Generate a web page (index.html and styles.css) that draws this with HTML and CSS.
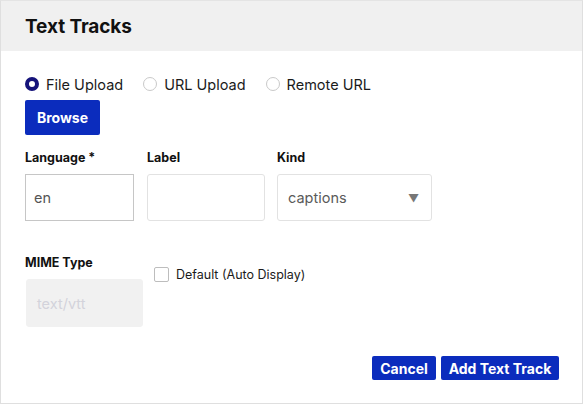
FILE: index.html
```html
<!DOCTYPE html>
<html>
<head>
<meta charset="utf-8">
<link rel="stylesheet" href="styles.css">
</head>
<body>
<div class="dialog">
  <div class="header"><h1 class="title">Text Tracks</h1></div>
  <div class="content">
    <div class="radios">
      <label class="radio"><span class="dot checked"></span>File Upload</label>
      <label class="radio"><span class="dot"></span>URL Upload</label>
      <label class="radio"><span class="dot"></span>Remote URL</label>
    </div>
    <button class="btn browse">Browse</button>
    <div class="row">
      <div class="field f1">
        <div class="lbl">Language *</div>
        <div class="input dark">en</div>
      </div>
      <div class="field f2">
        <div class="lbl">Label</div>
        <div class="input"></div>
      </div>
      <div class="field f3">
        <div class="lbl">Kind</div>
        <div class="input select">captions<span class="arrow">▼</span></div>
      </div>
    </div>
    <div class="row row2">
      <div class="field f2">
        <div class="lbl">MIME Type</div>
        <div class="input disabled">text/vtt</div>
      </div>
      <label class="check"><span class="box"></span>Default (Auto Display)</label>
    </div>
    <div class="actions">
      <button class="btn small cancel">Cancel</button>
      <button class="btn small add">Add Text Track</button>
    </div>
  </div>
</div>
</body>
</html>
```
FILE: styles.css
```css
* { box-sizing: border-box; }
html, body { margin: 0; padding: 0; background: #fff; }
body { font-family: "Inter", "Liberation Sans", sans-serif; color: #1b1b1f; }
.dialog {
  width: 583px;
  height: 404px;
  border: 1px solid #dfdfdf;
  border-top-color: #e4e4e4;
  display: flex;
  flex-direction: column;
}
.header {
  height: 50px;
  background: #f0f0f0;
  padding-left: 24px;
  display: flex;
  align-items: center;
}
.title {
  margin: 0;
  font-size: 19px;
  font-weight: 700;
  letter-spacing: -0.1px;
  color: #111;
  padding-top: 1px;
}
.content { padding: 0 24px; flex: 1; display: flex; flex-direction: column; }
.radios { display: flex; margin-top: 24px; height: 18px; align-items: center; }
.radio { display: flex; align-items: center; font-size: 14.5px; color: #1b1b1b; margin-right: 20px; }
.dot {
  width: 14px; height: 14px; border-radius: 50%;
  border: 1px solid #c9c9c9; margin-right: 7px; background: #fff;
}
.dot.checked { border: 4.5px solid #15137a; background: #fff; }
.btn {
  background: #0b2cbd;
  color: #fff;
  border: 0;
  border-radius: 2px;
  font-family: inherit;
  font-weight: 700;
  padding: 0;
  white-space: nowrap;
}
.browse { width: 75px; height: 35px; font-size: 14px; margin-top: 7px; }
.row { display: flex; margin-top: 15px; }
.field { display: flex; flex-direction: column; margin-right: 12px; }
.f1 { width: 109px; margin-right: 13px; }
.f2 { width: 118px; }
.f3 { width: 155px; }
.lbl { font-size: 12.5px; font-weight: 700; height: 16px; line-height: 16px; color: #111; margin-bottom: 8px; }
.input {
  height: 47px;
  border: 1px solid #e2e2e2;
  border-radius: 3px;
  font-size: 14.5px;
  color: #555;
  display: flex;
  align-items: center;
  padding-left: 10px;
}
.input.dark { border-color: #c6c6c6; border-radius: 0; padding-left: 8px; }
.select { justify-content: space-between; padding-right: 12px; color: #5a5a5a; }
.arrow { font-size: 11px; color: #777; }
.row2 { margin-top: 34px; align-items: flex-start; }
.disabled { background: #f1f1f1; border-color: #f1f1f1; color: #d3d3db; margin-left: 1px; height: 48px; }
.check { display: flex; align-items: center; font-size: 12.5px; color: #1b1b1b; margin-top: 12px; margin-left: -1px; }
.box { width: 15px; height: 15px; border: 1px solid #bdbdbd; border-radius: 2px; margin-right: 7px; }
.actions { display: flex; justify-content: flex-end; margin-top: auto; margin-bottom: 23px; margin-right: -1px; gap: 5px; }
.small { height: 24px; font-size: 14px; }
.cancel { width: 64px; }
.add { width: 118px; }
```
